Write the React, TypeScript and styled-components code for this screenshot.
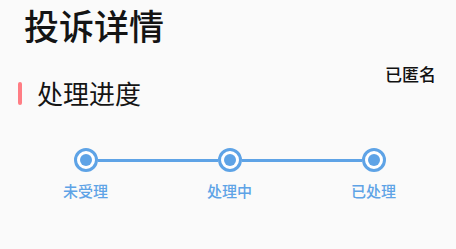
import styled, { createGlobalStyle } from "styled-components";

const GlobalStyle = createGlobalStyle`
  html, body {
    margin: 0;
    padding: 0;
    background: #fafafa;
  }
  body {
    font-family: "Noto Sans CJK SC", "Noto Sans", sans-serif;
    color: #161616;
  }
`;

const BLUE = "#5ea3e6";

const Page = styled.div`
  width: 456px;
  height: 249px;
  background: #fafafa;
  overflow: hidden;
  display: flex;
  flex-direction: column;
`;

const Title = styled.h1`
  margin: 7px 0 0 24px;
  font-size: 35px;
  line-height: 35px;
  font-weight: 500;
  color: #141414;
`;

const SectionRow = styled.div`
  display: flex;
  justify-content: space-between;
  align-items: flex-start;
  padding: 0 20px 0 18px;
  margin-top: 23px;
`;

const SectionTitle = styled.div`
  display: flex;
  align-items: center;
  gap: 15px;
  margin-top: 15px;
  font-size: 26px;
  line-height: 26px;
  font-weight: 400;
  color: #141414;
`;

const Accent = styled.span`
  width: 4px;
  height: 23px;
  border-radius: 2px;
  background: #ff7d84;
`;

const Anonymous = styled.span`
  font-size: 17px;
  line-height: 17px;
  font-weight: 500;
  color: #111;
`;

const Steps = styled.div`
  display: grid;
  grid-template-columns: repeat(3, 144px);
  padding-left: 13.5px;
  margin-top: 42px;
`;

const Step = styled.div`
  display: flex;
  flex-direction: column;
  align-items: center;
  gap: 11px;
`;

const Track = styled.div`
  display: flex;
  align-items: center;
  width: 100%;
  height: 24px;
`;

const Segment = styled.span<{ $on: boolean }>`
  flex: 1;
  height: 3px;
  background: ${(p) => (p.$on ? BLUE : "transparent")};
`;

const Dot = styled.span`
  box-sizing: border-box;
  width: 24px;
  height: 24px;
  border-radius: 50%;
  border: 3px solid ${BLUE};
  background: #fff;
  display: flex;
  align-items: center;
  justify-content: center;
`;

const Core = styled.span`
  width: 12px;
  height: 12px;
  border-radius: 50%;
  background: ${BLUE};
`;

const Label = styled.span`
  font-size: 15px;
  line-height: 15px;
  font-weight: 500;
  color: ${BLUE};
`;

const steps = ["未受理", "处理中", "已处理"];

export default function App() {
  return (
    <>
      <GlobalStyle />
      <Page>
        <Title>投诉详情</Title>
        <SectionRow>
          <SectionTitle>
            <Accent />
            处理进度
          </SectionTitle>
          <Anonymous>已匿名</Anonymous>
        </SectionRow>
        <Steps>
          {steps.map((s, i) => (
            <Step key={s}>
              <Track>
                <Segment $on={i > 0} />
                <Dot>
                  <Core />
                </Dot>
                <Segment $on={i < steps.length - 1} />
              </Track>
              <Label>{s}</Label>
            </Step>
          ))}
        </Steps>
      </Page>
    </>
  );
}
